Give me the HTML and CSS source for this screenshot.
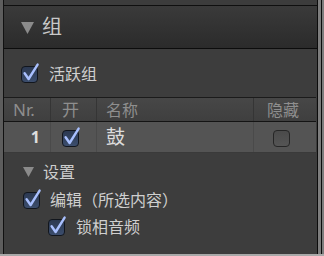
FILE: index.html
```html
<!DOCTYPE html>
<html lang="zh">
<head>
<meta charset="utf-8">
<link rel="stylesheet" href="styles.css">
</head>
<body>
<div class="screen">
  <div class="main">
    <div class="edge-left"></div>
    <div class="panel">
      <div class="top-gap"></div>
      <div class="section-head">
        <svg class="tri big" viewBox="0 0 13 12"><polygon points="0,0 13,0 6.5,12" /></svg>
        <span class="h-title">组</span>
      </div>
      <div class="body">
        <div class="check-row active">
          <svg class="cb" viewBox="0 0 17 17"><defs><linearGradient id="g1" x1="0" y1="0" x2="0" y2="1"><stop offset="0" stop-color="#2b3850"/><stop offset="1" stop-color="#3c4e6e"/></linearGradient></defs><rect x="0.5" y="0.5" width="16" height="16" rx="3.5" fill="url(#g1)" stroke="#12161d"/><path d="M3.6 7.2 L7.6 13 L16.6 -1.4" fill="none" stroke="#a9c0ff" stroke-width="2.4" stroke-linecap="round" stroke-linejoin="round"/></svg>
          <span class="label">活跃组</span>
        </div>
        <div class="table">
          <div class="thead">
            <div class="c c-nr">Nr.</div>
            <div class="c c-on">开</div>
            <div class="c c-name">名称</div>
            <div class="c c-hide">隐藏</div>
          </div>
          <div class="trow">
            <div class="c c-nr num">1</div>
            <div class="c c-on">
              <svg class="cb" viewBox="0 0 17 17"><defs><linearGradient id="g2" x1="0" y1="0" x2="0" y2="1"><stop offset="0" stop-color="#2b3850"/><stop offset="1" stop-color="#3c4e6e"/></linearGradient></defs><rect x="0.5" y="0.5" width="16" height="16" rx="3.5" fill="url(#g2)" stroke="#12161d"/><path d="M3.6 7.2 L7.6 13 L16.6 -1.4" fill="none" stroke="#a9c0ff" stroke-width="2.4" stroke-linecap="round" stroke-linejoin="round"/></svg>
            </div>
            <div class="c c-name drum">鼓</div>
            <div class="c c-hide">
              <svg class="cb" viewBox="0 0 17 17"><defs><linearGradient id="g3" x1="0" y1="0" x2="0" y2="1"><stop offset="0" stop-color="#4a4a4a"/><stop offset="1" stop-color="#555555"/></linearGradient></defs><rect x="0.5" y="0.5" width="16" height="16" rx="3.5" fill="url(#g3)" stroke="#262626"/></svg>
            </div>
          </div>
        </div>
        <div class="settings-head">
          <svg class="tri small" viewBox="0 0 11 10"><polygon points="0,0 11,0 5.5,10" /></svg>
          <span class="s-title">设置</span>
        </div>
        <div class="check-row edit">
          <svg class="cb" viewBox="0 0 17 17"><defs><linearGradient id="g4" x1="0" y1="0" x2="0" y2="1"><stop offset="0" stop-color="#2b3850"/><stop offset="1" stop-color="#3c4e6e"/></linearGradient></defs><rect x="0.5" y="0.5" width="16" height="16" rx="3.5" fill="url(#g4)" stroke="#12161d"/><path d="M3.6 7.2 L7.6 13 L16.6 -1.4" fill="none" stroke="#a9c0ff" stroke-width="2.4" stroke-linecap="round" stroke-linejoin="round"/></svg>
          <span class="label">编辑（所选内容）</span>
        </div>
        <div class="check-row sub">
          <svg class="cb" viewBox="0 0 17 17"><defs><linearGradient id="g5" x1="0" y1="0" x2="0" y2="1"><stop offset="0" stop-color="#2b3850"/><stop offset="1" stop-color="#3c4e6e"/></linearGradient></defs><rect x="0.5" y="0.5" width="16" height="16" rx="3.5" fill="url(#g5)" stroke="#12161d"/><path d="M3.6 7.2 L7.6 13 L16.6 -1.4" fill="none" stroke="#a9c0ff" stroke-width="2.4" stroke-linecap="round" stroke-linejoin="round"/></svg>
          <span class="label">锁相音频</span>
        </div>
      </div>
    </div>
    <div class="edge-right">
      <div class="er-dark"></div>
      <div class="er-gray"></div>
      <div class="er-dark"></div>
      <div class="er-gray2"></div>
    </div>
  </div>
  <div class="bottom"></div>
</div>
</body>
</html>
```

FILE: styles.css
```css
html, body {
  margin: 0;
  padding: 0;
  background: #3d3d3d;
}
body {
  font-family: "Noto Sans", "Noto Sans CJK SC", sans-serif;
  color: #cdcdcd;
}
.screen {
  width: 324px;
  height: 256px;
  display: flex;
  flex-direction: column;
  overflow: hidden;
}
.main {
  flex: 1;
  display: flex;
  min-height: 0;
}
.bottom {
  height: 2px;
  background: #a9a9a9;
}
.edge-left {
  width: 3px;
  background: #5d5d5d;
  border-right: 1px solid #111;
}
.panel {
  width: 313px;
  display: flex;
  flex-direction: column;
  background: #3d3d3d;
}
.edge-right {
  width: 7px;
  display: flex;
}
.er-dark { width: 1px; background: #0c0c0c; }
.er-gray { width: 3px; background: #7d7d7d; }
.er-gray2 { width: 2px; background: #7d7d7d; }

.top-gap {
  height: 5px;
  border-bottom: 1px solid #0f0f0f;
  background: #3c3c3c;
}
.section-head {
  height: 42px;
  background: linear-gradient(#3a3a3a, #2b2b2b);
  border-bottom: 1px solid #0c0c0c;
  display: flex;
  align-items: center;
  padding-left: 17px;
}
.tri { fill: #8b8b8b; display: block; }
.tri.big { width: 13px; height: 12px; margin-top: 1px; }
.tri.small { width: 11px; height: 10px; }
.h-title {
  font-size: 20px;
  margin-left: 8px;
  color: #c9c9c9;
  line-height: 1;
}
.body {
  flex: 1;
  display: flex;
  flex-direction: column;
}
.cb {
  width: 17px;
  height: 17px;
  overflow: visible;
  display: block;
  flex: none;
}
.check-row {
  display: flex;
  align-items: center;
  height: 20px;
}
.check-row .label {
  font-size: 16px;
  line-height: 1;
  color: #cfcfcf;
}
.active {
  margin-top: 15px;
  padding-left: 17px;
  gap: 11px;
}
.table {
  margin-top: 13px;
  margin-right: 1px;
  border-top: 1px solid #1b1b1b;
}
.thead, .trow {
  display: grid;
  grid-template-columns: 47px 46px 157px 1fr;
}
.thead {
  height: 23px;
  background: linear-gradient(#474747, #3f3f3f);
  border-bottom: 1px solid #141414;
}
.trow {
  height: 30px;
  background: #545454;
  border-bottom: 1px solid #3a3a3a;
}
.c {
  display: flex;
  align-items: center;
  box-sizing: border-box;
  border-right: 1px solid #353535;
  font-size: 16px;
  line-height: 1;
}
.trow .c { border-right-color: #4a4a4a; }
.c:last-child { border-right: none; }
.thead .c { color: #8e8e8e; }
.thead .c-nr { padding-left: 9px; font-size: 17px; }
.thead .c-on { padding-left: 11px; font-size: 17px; }
.thead .c-name { padding-left: 9px; }
.thead .c-hide { padding-left: 13px; font-size: 16px; }
.num {
  justify-content: flex-end;
  padding-right: 10px;
  font-weight: bold;
  color: #dedede;
}
.trow .c-on { padding-left: 11px; padding-top: 2px; }
.drum {
  padding-left: 9px;
  font-size: 19px;
  color: #dcdcdc;
}
.trow .c-hide { padding-left: 19px; padding-top: 2px; }

.settings-head {
  display: flex;
  align-items: center;
  height: 24px;
  margin-top: 7px;
  padding-left: 19px;
}
.s-title {
  font-size: 16px;
  margin-left: 9px;
  color: #cdcdcd;
  line-height: 1;
}
.edit {
  margin-top: 6px;
  padding-left: 19px;
  gap: 10px;
}
.sub {
  margin-top: 7px;
  padding-left: 44px;
  gap: 11px;
}
```
